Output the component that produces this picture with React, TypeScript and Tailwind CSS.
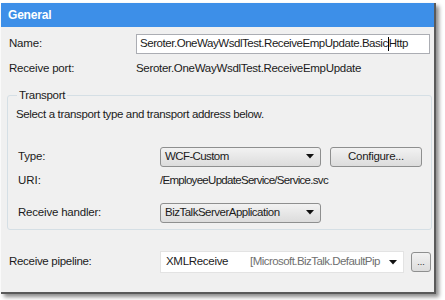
function Arrow() {
  return (
    <svg width="8" height="5" viewBox="0 0 8 5" className="shrink-0">
      <path d="M0 0 L8 0 L4 4.5 Z" fill="#111" />
    </svg>
  );
}

function Combo({ text, width, track }: { text: string; width: string; track: string }) {
  return (
    <div
      className={`${width} h-[20px] flex items-center justify-between pl-[4px] pr-[6px] rounded-[3px] border border-[#8e8f8f] bg-gradient-to-b from-[#f2f2f2] to-[#dcdcdc]`}
    >
      <span className={track}>{text}</span>
      <Arrow />
    </div>
  );
}

export default function App() {
  return (
    <div
      className="w-[445px] h-[300px] bg-white overflow-hidden pt-[3px] text-[11.5px] text-[#1b1b1b]"
      style={{ fontFamily: '"Liberation Sans", Arial, sans-serif' }}
    >
      <div className="ml-[1px] w-[435px] h-[291px] bg-[#f0f0f0] border-r-2 border-b-2 border-[#5a5a5a] shadow-[3px_3px_4px_rgba(0,0,0,0.45)] flex flex-col">
        {/* header */}
        <div className="h-[24px] bg-[#3d8fe8] text-white font-bold text-[12px] flex items-center pl-[7px] tracking-[-0.2px]">
          General
        </div>

        {/* name */}
        <div className="mt-[7px] h-[20px] flex items-center">
          <span className="w-[135px] pl-[8px] tracking-[-0.2px]">Name:</span>
          <div className="w-[294px] h-[20px] bg-white border border-[#abadb3] flex items-center pl-[3px] tracking-[-0.45px]">
            Seroter.OneWayWsdlTest.ReceiveEmpUpdate.Basic
            <span className="inline-block w-[1px] h-[14px] bg-black" />
            Http
          </div>
        </div>

        {/* receive port */}
        <div className="mt-[5px] h-[20px] flex items-center">
          <span className="w-[135px] pl-[8px] tracking-[-0.2px]">Receive port:</span>
          <span className="tracking-[-0.3px]">Seroter.OneWayWsdlTest.ReceiveEmpUpdate</span>
        </div>

        {/* transport group */}
        <fieldset className="ml-[6px] mt-[8px] w-[425px] h-[143px] border border-[#d5dfe5] rounded-[3px] pl-[8px] pr-0 pt-0">
          <legend className="ml-[1px] px-[2px] tracking-[-0.3px]">Transport</legend>
          <div className="mt-[2px] tracking-[-0.35px]">
            Select a transport type and transport address below.
          </div>
          <div className="mt-[23px] h-[20px] flex items-center">
            <span className="w-[144px] pl-[2px] tracking-[-0.2px]">Type:</span>
            <Combo text="WCF-Custom" width="w-[161px]" track="tracking-[-0.6px]" />
            <div className="ml-[9px] w-[92px] h-[20px] rounded-[3px] border border-[#8e8f8f] bg-gradient-to-b from-[#f2f2f2] to-[#dcdcdc] flex items-center justify-center tracking-[-0.3px]">
              Configure...
            </div>
          </div>
          <div className="mt-[4px] h-[20px] flex items-center">
            <span className="w-[144px] pl-[2px]">URI:</span>
            <span className="tracking-[-0.7px]">/EmployeeUpdateService/Service.svc</span>
          </div>
          <div className="mt-[12px] h-[20px] flex items-center">
            <span className="w-[144px] pl-[2px] tracking-[-0.2px]">Receive handler:</span>
            <Combo text="BizTalkServerApplication" width="w-[161px]" track="tracking-[-0.5px]" />
          </div>
        </fieldset>

        {/* pipeline */}
        <div className="mt-[21px] h-[22px] flex items-center">
          <span className="w-[159px] pl-[8px] tracking-[-0.3px]">Receive pipeline:</span>
          <div className="w-[244px] h-[22px] bg-white border border-[#e3e3e3] flex items-center pl-[5px] pr-[6px]">
            <span className="w-[84px] tracking-[-0.3px]">XMLReceive</span>
            <span className="flex-1 text-[#707070] tracking-[-0.55px] whitespace-nowrap">
              [Microsoft.BizTalk.DefaultPip
            </span>
            <Arrow />
          </div>
          <div className="ml-[7px] w-[20px] h-[20px] rounded-[3px] border border-[#8e8f8f] bg-gradient-to-b from-[#f2f2f2] to-[#dcdcdc] flex items-end justify-center pb-[4px] text-[9px] leading-none">
            ...
          </div>
        </div>
      </div>
    </div>
  );
}
